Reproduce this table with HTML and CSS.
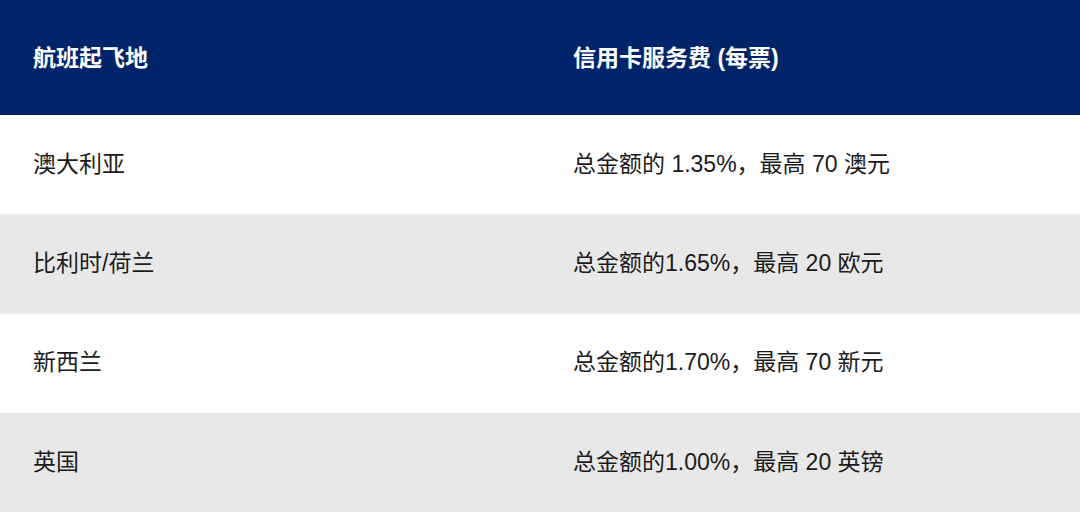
FILE: index.html
```html
<!DOCTYPE html>
<html lang="zh">
<head>
<meta charset="utf-8">
<link rel="stylesheet" href="styles.css">
</head>
<body>
<div class="table">
  <div class="row head">
    <div class="cell c1">航班起飞地</div>
    <div class="cell c2">信用卡服务费 (每票)</div>
  </div>
  <div class="row">
    <div class="cell c1">澳大利亚</div>
    <div class="cell c2">总金额的 1.35%，最高 70 澳元</div>
  </div>
  <div class="row alt">
    <div class="cell c1">比利时/荷兰</div>
    <div class="cell c2">总金额的1.65%，最高 20 欧元</div>
  </div>
  <div class="row">
    <div class="cell c1">新西兰</div>
    <div class="cell c2">总金额的1.70%，最高 70 新元</div>
  </div>
  <div class="row alt">
    <div class="cell c1">英国</div>
    <div class="cell c2">总金额的1.00%，最高 20 英镑</div>
  </div>
</div>
</body>
</html>
```
FILE: styles.css
```css
html, body {
  margin: 0;
  padding: 0;
  background: #ffffff;
}
body {
  font-family: "Liberation Sans", "Noto Sans CJK SC", sans-serif;
  color: #1b1b1b;
  width: 1080px;
  height: 512px;
  overflow: hidden;
}
.table {
  display: flex;
  flex-direction: column;
}
.row {
  display: grid;
  grid-template-columns: 540px 540px;
  align-items: center;
  box-sizing: border-box;
  height: 99.25px;
  font-size: 23px;
  line-height: 1.2;
}
.row.head {
  height: 115px;
  padding-top: 3px;
  background: #002469;
  color: #ffffff;
  font-weight: bold;
}
.row.alt {
  background: #e8e8e8;
}
.cell.c1 {
  padding-left: 33px;
}
.cell.c2 {
  padding-left: 33px;
}
```
